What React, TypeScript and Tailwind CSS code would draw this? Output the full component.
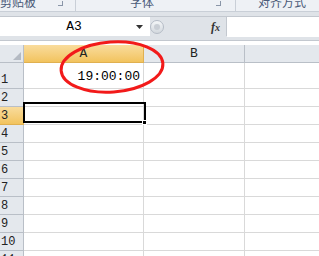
import React from "react";

const rows = [1, 2, 3, 4, 5, 6, 7, 8, 9, 10, 11];

export default function App() {
  const mono = { fontFamily: '"Liberation Mono", "DejaVu Sans Mono", monospace' };
  const cjk = { fontFamily: '"Noto Sans CJK SC", "Noto Sans", sans-serif' };
  return (
    <div className="w-[319px] h-[256px] overflow-hidden bg-white relative">
      {/* ribbon group labels */}
      <div className="h-[12px] bg-[#eef1f5] border-b border-[#c9cfd7] flex overflow-hidden text-[12px] leading-[12px] text-[#4a5a78]" style={cjk}>
        <div className="w-[76px] shrink-0 border-r border-[#c9cfd7] flex items-start">
          <span className="mt-[-4px] ml-[0px]">剪贴板</span>
          <span className="ml-[22px] mt-[1px] w-[5px] h-[5px] border-r border-b border-[#8a96a8]" />
        </div>
        <div className="w-[160px] shrink-0 border-r border-[#c9cfd7] flex items-start">
          <span className="mt-[-4px] ml-[54px]">字体</span>
          <span className="ml-[62px] mt-[1px] w-[5px] h-[5px] border-r border-b border-[#8a96a8]" />
        </div>
        <div className="flex-1 flex items-start">
          <span className="mt-[-4px] ml-[22px]">对齐方式</span>
        </div>
      </div>
      {/* formula bar */}
      <div className="h-[29px] bg-[#dfe3e8] pt-[4px] border-b border-[#c3c8cf]">
        <div className="h-[21px] flex border-t border-[#c3c8cf]">
          <div className="w-[150px] h-[19px] bg-white flex items-center relative">
            <span className="flex-1 text-center text-[13px] text-black pl-[12px]" style={mono}>A3</span>
            <svg width="7" height="4" className="mr-[7px]" viewBox="0 0 7 4">
              <path d="M0 0 H7 L3.5 4 Z" fill="#333" />
            </svg>
          </div>
          <div className="w-[14px] h-[19px] flex items-center">
            <div className="w-[14px] h-[14px] rounded-full border border-[#b5bcc6] bg-gradient-to-b from-[#f4f6f8] to-[#d3d8de] flex items-center justify-center">
              <div className="w-[6px] h-[6px] rounded-full bg-[#c9ced5]" />
            </div>
          </div>
          <div className="w-[63px] h-[19px] flex items-center justify-end pr-[6px] border-r border-[#c3c8cf]">
            <span className="text-[12px] italic font-bold text-[#333]" style={{ fontFamily: '"Liberation Serif", serif' }}>
              f<span className="text-[10px]">x</span>
            </span>
          </div>
          <div className="flex-1 h-[20px] bg-white" />
        </div>
      </div>
      {/* column header */}
      <div className="flex h-[18px] mt-[4px]">
        <div className="w-[24px] h-[18px] bg-[#e4e8ed] border-r border-b border-[#b9bfc7] flex items-end justify-end pr-[2px] pb-[2px]">
          <svg width="8" height="8" viewBox="0 0 8 8">
            <path d="M8 0 V8 H0 Z" fill="#b4bac3" />
          </svg>
        </div>
        <div className="w-[120px] h-[18px] bg-gradient-to-b from-[#f9dc9c] to-[#f2c35d] border-r border-b border-[#e0b050] flex items-center justify-center text-[13px] text-[#222]" style={mono}>
          A
        </div>
        <div className="w-[101px] h-[18px] bg-[#e4e8ed] border-r border-b border-[#b9bfc7] flex items-center justify-center text-[13px] text-[#222]" style={mono}>
          B
        </div>
        <div className="flex-1 h-[18px] bg-[#e4e8ed] border-b border-[#b9bfc7]" />
      </div>
      {/* rows */}
      {rows.map((r) => {
        const h = r === 1 ? "h-[26px]" : "h-[18px]";
        const sel = r === 3;
        return (
          <div key={r} className={`flex ${h}`}>
            <div
              className={`w-[24px] ${h} border-r border-b flex items-end pl-[1px] pb-[1px] text-[12px] leading-[14px] text-[#222] ${
                sel ? "bg-gradient-to-b from-[#f9dc9c] to-[#f2c35d] border-[#e0b050]" : "bg-[#e4e8ed] border-[#b9bfc7]"
              }`}
              style={mono}
            >
              {r}
            </div>
            <div className={`w-[120px] ${h} border-r border-b border-[#d9d9d9] flex items-end justify-end pr-[3px] pb-[4px] text-[13px] leading-[14px] text-black`} style={mono}>
              {r === 1 ? "19:00:00" : ""}
            </div>
            <div className={`w-[101px] ${h} border-r border-b border-[#d9d9d9]`} />
            <div className={`flex-1 ${h} border-b border-[#d9d9d9]`} />
          </div>
        );
      })}
      {/* selection box A3 */}
      <div className="absolute left-[23px] top-[102px] w-[123px] h-[21px] border-[2px] border-black pointer-events-none" />
      <div className="absolute left-[142px] top-[120px] w-[5px] h-[5px] bg-black border border-white" />
      {/* red ellipse annotation */}
      <svg className="absolute left-0 top-0 pointer-events-none" width="319" height="256">
        <ellipse cx="112" cy="67" rx="51" ry="25" fill="none" stroke="#f21a1a" strokeWidth="3" transform="rotate(-4 112 67)" />
      </svg>
    </div>
  );
}
